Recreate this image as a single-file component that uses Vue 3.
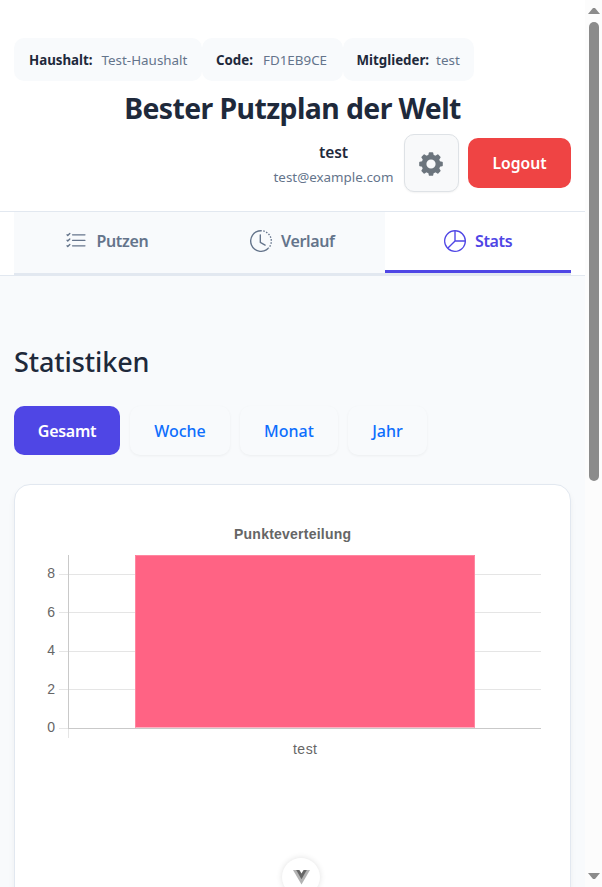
<script setup>
const chips = [
  { key: 'household', label: 'Haushalt:', value: 'Test-Haushalt' },
  { key: 'code', label: 'Code:', value: 'FD1EB9CE' },
  { key: 'members', label: 'Mitglieder:', value: 'test' },
]
const periods = [
  { key: 'all', label: 'Gesamt', active: true },
  { key: 'week', label: 'Woche' },
  { key: 'month', label: 'Monat' },
  { key: 'year', label: 'Jahr' },
]
const ticks = [
  { value: 8, y: 574.5, base: 578 },
  { value: 6, y: 612.5, base: 617 },
  { value: 4, y: 651.5, base: 655 },
  { value: 2, y: 689.5, base: 694 },
  { value: 0, y: 728.5, base: 732 },
]
const teeth = [0, 45, 90, 135, 180, 225, 270, 315]
</script>

<template>
  <div class="window">
    <div class="page">
      <header class="header">
        <div class="chips">
          <div v-for="c in chips" :key="c.key" class="chip" :class="c.key">
            <strong>{{ c.label }}</strong><span>{{ c.value }}</span>
          </div>
        </div>
        <h1><span>Bester Putzplan der Welt</span></h1>
        <div class="account">
          <div class="user">
            <div class="name">test</div>
            <div class="mail">test@example.com</div>
          </div>
          <button class="gear" aria-label="Einstellungen">
            <svg width="24" height="24" viewBox="0 0 24 24" fill="currentColor">
              <circle cx="12" cy="12" r="7" fill="none" stroke="currentColor" stroke-width="4.8" />
              <path v-for="a in teeth" :key="a" d="M9 4.5L9.8 .8Q9.9 .2 10.5 .2H13.5Q14.1 .2 14.2 .8L15 4.5z" :transform="`rotate(${a} 12 12)`" />
            </svg>
          </button>
          <button class="logout">Logout</button>
        </div>
      </header>

      <nav class="nav">
        <div class="tabs">
          <a class="tab putzen">
            <svg width="22" height="22" viewBox="0 0 16 16" fill="currentColor">
              <path fill-rule="evenodd" d="M5 11.5a.5.5 0 0 1 .5-.5h9a.5.5 0 0 1 0 1h-9a.5.5 0 0 1-.5-.5m0-4a.5.5 0 0 1 .5-.5h9a.5.5 0 0 1 0 1h-9a.5.5 0 0 1-.5-.5m0-4a.5.5 0 0 1 .5-.5h9a.5.5 0 0 1 0 1h-9a.5.5 0 0 1-.5-.5M3.854 2.146a.5.5 0 0 1 0 .708l-1.5 1.5a.5.5 0 0 1-.708 0l-.5-.5a.5.5 0 1 1 .708-.708L2 3.293l1.146-1.147a.5.5 0 0 1 .708 0m0 4a.5.5 0 0 1 0 .708l-1.5 1.5a.5.5 0 0 1-.708 0l-.5-.5a.5.5 0 1 1 .708-.708L2 7.293l1.146-1.147a.5.5 0 0 1 .708 0m0 4a.5.5 0 0 1 0 .708l-1.5 1.5a.5.5 0 0 1-.708 0l-.5-.5a.5.5 0 0 1 .708-.708l.146.147 1.146-1.147a.5.5 0 0 1 .708 0" />
            </svg>
            <span>Putzen</span>
          </a>
          <a class="tab verlauf">
            <svg width="22" height="22" viewBox="0 0 16 16" fill="currentColor">
              <path d="M8.515 1.019A7 7 0 0 0 8 1V0a8 8 0 0 1 .589.022zm2.004.45a7 7 0 0 0-.985-.299l.219-.976q.576.129 1.126.342zm1.37.71a7 7 0 0 0-.439-.27l.493-.87a8 8 0 0 1 .979.654l-.615.789a7 7 0 0 0-.418-.302zm1.834 1.79a7 7 0 0 0-.653-.796l.724-.69q.406.429.747.91zm.744 1.352a7 7 0 0 0-.214-.468l.893-.45a8 8 0 0 1 .45 1.088l-.95.313a7 7 0 0 0-.179-.483m.53 2.507a7 7 0 0 0-.1-1.025l.985-.17q.1.58.116 1.17zm-.131 1.538q.05-.254.081-.51l.993.123a8 8 0 0 1-.23 1.155l-.964-.267q.069-.247.12-.501m-.952 2.379q.276-.436.486-.908l.914.405q-.24.54-.555 1.038zm-.964 1.205q.183-.183.35-.378l.758.653a8 8 0 0 1-.401.432z" />
              <path d="M8 1a7 7 0 1 0 4.95 11.95l.707.707A8.001 8.001 0 1 1 8 0z" />
              <path d="M7.5 3a.5.5 0 0 1 .5.5v5.21l3.248 1.856a.5.5 0 0 1-.496.868l-3.5-2A.5.5 0 0 1 7 9V3.5a.5.5 0 0 1 .5-.5" />
            </svg>
            <span>Verlauf</span>
          </a>
          <a class="tab stats active">
            <svg width="22" height="22" viewBox="0 0 16 16" fill="currentColor">
              <path d="M7.5 1.018a7 7 0 0 0-4.79 11.566L7.5 7.793zm1 0V7.5h6.482A7 7 0 0 0 8.5 1.018M14.982 8.5H8.207l-4.79 4.79A7 7 0 0 0 14.982 8.5M0 8a8 8 0 1 1 16 0A8 8 0 0 1 0 8" />
            </svg>
            <span>Stats</span>
          </a>
        </div>
      </nav>

      <main class="main">
        <h2><span>Statistiken</span></h2>
        <div class="periods">
          <button v-for="p in periods" :key="p.key" class="period" :class="[p.key, { active: p.active }]">{{ p.label }}</button>
        </div>
        <section class="card">
          <svg class="chart" width="526" height="260" viewBox="30 515 526 260">
            <text class="chart-title" x="292.5" y="539" text-anchor="middle" textLength="117">Punkteverteilung</text>
            <g v-for="t in ticks" :key="t.value">
              <path :d="`M59 ${t.y}H541`" stroke="#e5e5e5" />
              <text class="tick" x="55" :y="t.base" text-anchor="end">{{ t.value }}</text>
            </g>
            <path d="M68.5 729V738" stroke="#e5e5e5" />
            <path d="M68.5 555V729M68 728.5H541" stroke="#c9c9c9" />
            <rect x="135" y="555" width="340" height="172.5" fill="#ff6384" />
            <path d="M135.5 727.5V555.5H474.5V727.5" fill="none" stroke="#ff86a0" />
            <text class="tick" x="305" y="754" text-anchor="middle" textLength="24">test</text>
          </svg>
        </section>
      </main>
    </div>

    <div class="scrollbar">
      <svg width="12" height="6" viewBox="0 0 12 6"><path d="M0 6L5 0H7L12 6z" fill="#8b8b8b" /></svg>
      <div class="thumb"></div>
      <svg class="down" width="12" height="6" viewBox="0 0 12 6"><path d="M0 0L5 6H7L12 0z" fill="#8b8b8b" /></svg>
    </div>

    <div class="devtools">
      <svg width="17" height="15" viewBox="0 0 17 15">
        <path d="M0 0H17L8.5 14.5z" fill="#b3b3b3" />
        <path d="M3.2 0H13.8L8.5 9.2z" fill="#666" />
        <path d="M6.4 0H10.6L8.5 3.4z" fill="#fff" />
      </svg>
    </div>
  </div>
</template>

<style>
html,
body {
  margin: 0;
  overflow: hidden;
}
</style>

<style scoped>
.window {
  position: relative;
  display: flex;
  width: 602px;
  height: 887px;
  overflow: hidden;
  background: #f8fafc;
  color: #1e293b;
  font-family: 'Noto Sans', 'Open Sans', sans-serif;
}
.window * {
  box-sizing: border-box;
}
.page {
  width: 585px;
  flex: none;
}
h1,
h2 {
  margin: 0;
}
button {
  font-family: inherit;
  border: 0;
  padding: 0;
}
.header {
  height: 212px;
  padding: 38px 14px 0;
  background: #fff;
  border-bottom: 1px solid #e2e8f0;
}
.chips {
  display: flex;
}
.chip {
  height: 43px;
  display: flex;
  align-items: center;
  gap: 8px;
  padding: 0 0 0 15px;
  border-radius: 10px;
  background: #f8fafc;
  white-space: nowrap;
}
.chip strong {
  font-weight: 700;
  font-size: 13.3px;
}
.chip span {
  color: #64748b;
  font-size: 13.4px;
}
.household { width: 188px; gap: 9px; }
.code { width: 140.5px; padding-left: 14px; gap: 10px; }
.members { width: 131.5px; padding-left: 14px; gap: 7px; }
h1 {
  height: 53px;
  display: flex;
  align-items: center;
  justify-content: center;
  font-size: 28.4px;
  font-weight: 700;
  letter-spacing: -0.58px;
  white-space: nowrap;
}
.account {
  display: flex;
  align-items: center;
  justify-content: flex-end;
  height: 58px;
}
.user {
  width: 121px;
  margin-right: 10px;
  padding-top: 3px;
  display: flex;
  flex-direction: column;
  align-items: center;
}
.name {
  height: 25px;
  line-height: 22px;
  font-size: 15.5px;
  font-weight: 600;
  letter-spacing: -0.1px;
}
.mail {
  height: 23px;
  line-height: 23px;
  font-size: 13.4px;
  color: #64748b;
}
.gear {
  width: 55px;
  height: 58px;
  margin-right: 9px;
  display: flex;
  align-items: center;
  justify-content: center;
  padding: 2px 1px 0 0;
  color: #6c757d;
  background: #f8f9fa;
  border: 1px solid #dee2e6;
  border-radius: 10px;
  box-shadow: 0 1px 2px rgba(0, 0, 0, 0.05);
}
.logout {
  width: 103px;
  height: 50px;
  border-radius: 10px;
  background: #ef4444;
  color: #fff;
  font-size: 15.7px;
  font-weight: 600;
}
.nav {
  height: 64px;
  padding: 0 14px;
  background: #fff;
  border-bottom: 1px solid #e2e8f0;
}
.tabs {
  display: flex;
  height: 63px;
  border-bottom: 2px solid #e2e8f0;
}
.tab {
  display: flex;
  gap: 9px;
  padding: 18px 0 0;
  height: 61px;
  background: #f8fafc;
  color: #64748b;
  font-size: 16px;
  font-weight: 600;
  letter-spacing: -0.35px;
  line-height: 22px;
}
.tab svg {
  flex: none;
}
.putzen { width: 186px; padding-left: 51px; gap: 9.5px; }
.verlauf { width: 185px; padding-left: 50px; }
.stats { width: 186px; padding-left: 59px; }
.tab.active {
  background: #fff;
  color: #4f46e5;
  border-bottom: 3px solid #4f46e5;
}
.main {
  padding: 66px 14px 0;
}
h2 {
  height: 64px;
  line-height: 40px;
  font-size: 27px;
  font-weight: 500;
  letter-spacing: -0.1px;
}
.periods {
  display: flex;
  gap: 10px;
}
.period {
  height: 49px;
  border-radius: 10px;
  color: #0d6efd;
  background: #f8fafc;
  font-size: 16px;
  font-weight: 500;
  box-shadow: 0 1px 3px rgba(0, 0, 0, 0.05);
}
.period.active {
  background: #4f46e5;
  color: #fff;
  font-weight: 600;
  letter-spacing: -0.3px;
  box-shadow: none;
}
.all { width: 106px; }
.week { width: 100px; }
.month { width: 98px; }
.year { width: 79px; }
.card {
  margin-top: 29px;
  height: 500px;
  padding: 30px 15px;
  border: 1px solid #e2e8f0;
  border-radius: 16px;
  background: #fff;
  box-shadow: 0 4px 6px rgba(0, 0, 0, 0.05);
}
.chart {
  display: block;
  font-family: 'Liberation Sans', sans-serif;
  fill: #666;
}
.chart-title {
  font-size: 14px;
  font-weight: 700;
}
.tick {
  font-size: 14px;
}
.scrollbar {
  width: 17px;
  height: 887px;
  padding: 8px 0;
  display: flex;
  flex-direction: column;
  align-items: center;
  background: #fcfcfc;
}
.thumb {
  width: 10px;
  height: 459px;
  margin-top: 8px;
  border-radius: 5px;
  background: #8b8b8b;
}
.down {
  margin-top: auto;
}
.devtools {
  position: absolute;
  left: 282px;
  top: 858px;
  width: 38px;
  height: 38px;
  display: flex;
  justify-content: center;
  padding-top: 12px;
  border-radius: 50%;
  background: #fff;
  box-shadow: 0 0 6px rgba(0, 0, 0, 0.12);
}
</style>
